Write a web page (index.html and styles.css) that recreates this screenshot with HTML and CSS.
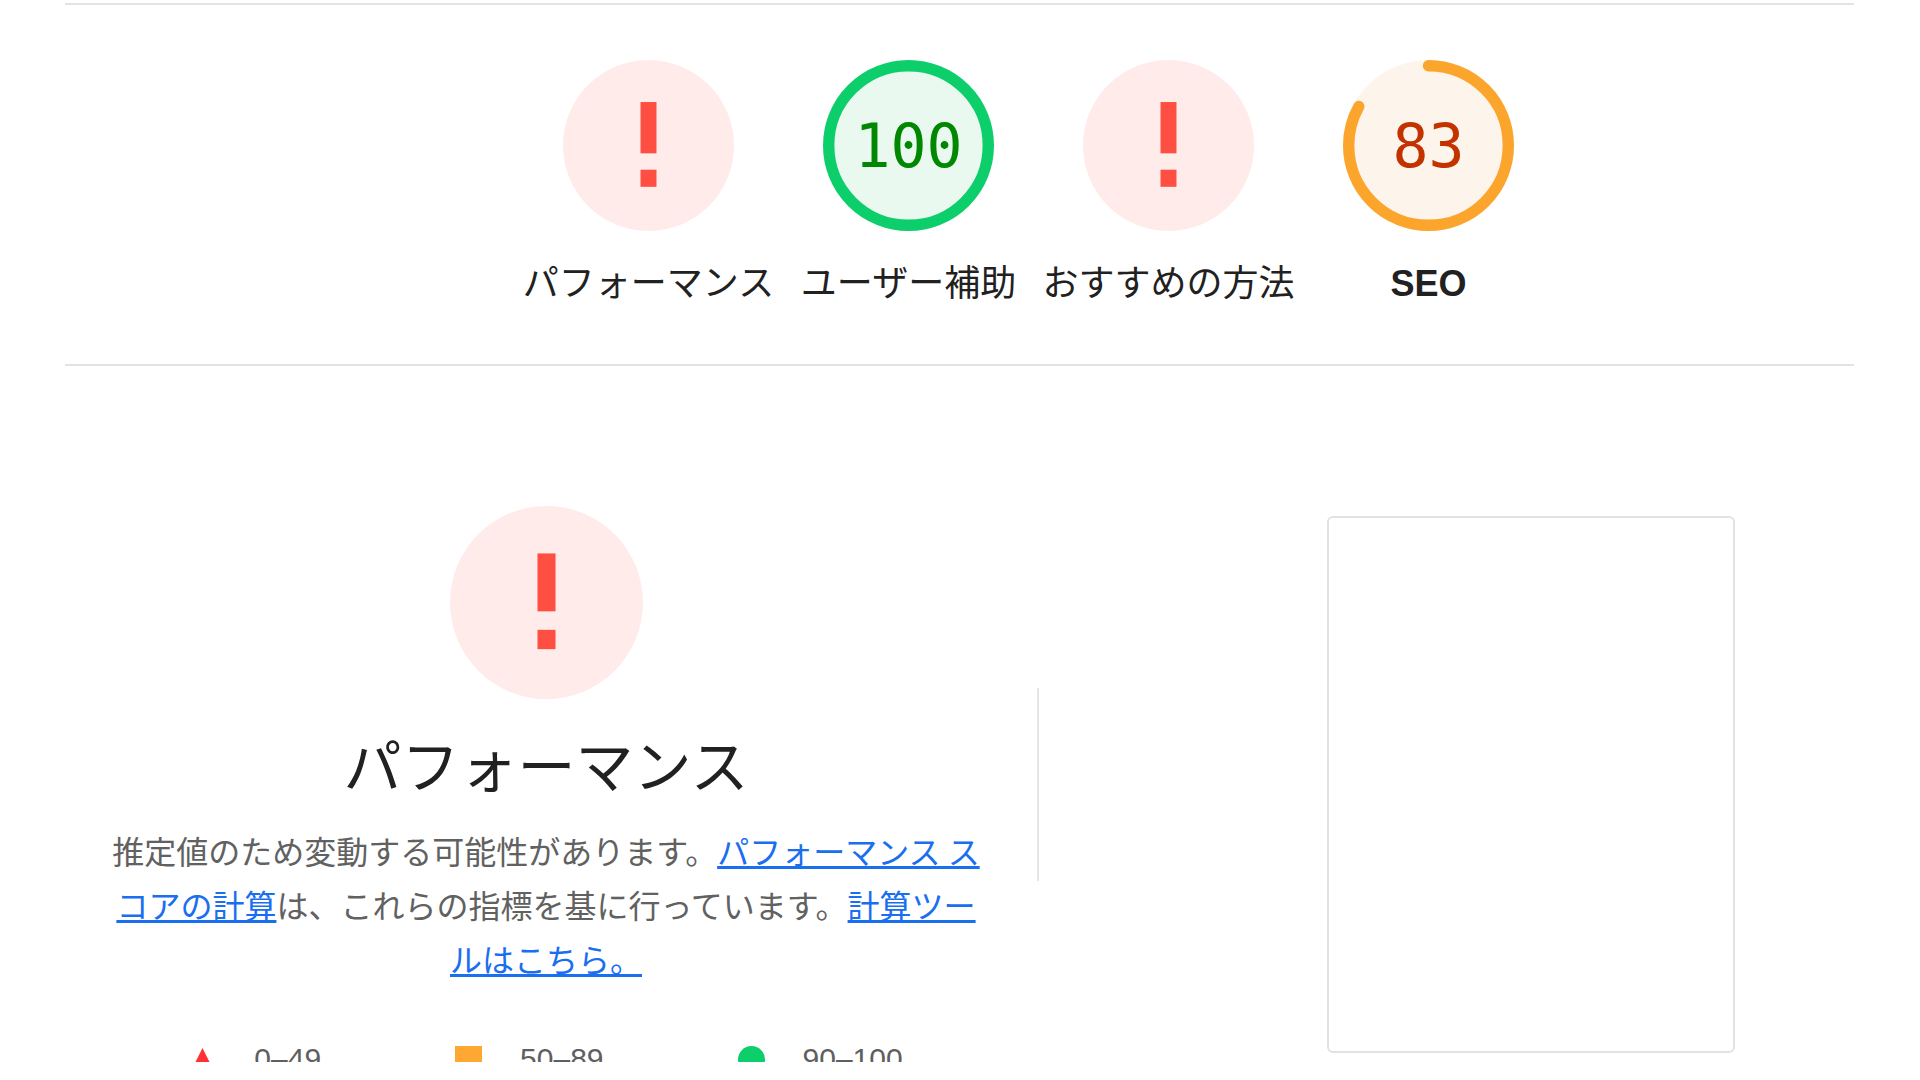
FILE: index.html
```html
<!DOCTYPE html>
<html lang="ja">
<head>
    <meta charset="UTF-8">
    <meta name="viewport" content="width=device-width, initial-scale=1.0">
    <title>Lighthouse レポート</title>
    <link rel="stylesheet" href="styles.css">
</head>
<body>
    <div class="viewport">
        <div class="report">
            <header class="scores-header">
                <a class="gauge" href="#performance">
                    <svg class="gauge-svg" viewBox="0 0 120 120">
                        <circle cx="60" cy="60" r="60" class="fail-bg"/>
                        <rect x="54.4" y="29.5" width="11.2" height="36" class="fail-mark"/>
                        <rect x="54.4" y="77" width="11.2" height="12" class="fail-mark"/>
                    </svg>
                    <span class="gauge-label">パフォーマンス</span>
                </a>
                <a class="gauge" href="#accessibility">
                    <svg class="gauge-svg" viewBox="0 0 120 120">
                        <circle cx="60" cy="60" r="56" class="pass-ring"/>
                        <text x="60" y="75" class="gauge-num pass-num">100</text>
                    </svg>
                    <span class="gauge-label">ユーザー補助</span>
                </a>
                <a class="gauge" href="#best-practices">
                    <svg class="gauge-svg" viewBox="0 0 120 120">
                        <circle cx="60" cy="60" r="60" class="fail-bg"/>
                        <rect x="54.4" y="29.5" width="11.2" height="36" class="fail-mark"/>
                        <rect x="54.4" y="77" width="11.2" height="12" class="fail-mark"/>
                    </svg>
                    <span class="gauge-label">おすすめの方法</span>
                </a>
                <a class="gauge" href="#seo">
                    <svg class="gauge-svg" viewBox="0 0 120 120">
                        <circle cx="60" cy="60" r="56" class="avg-base"/>
                        <circle cx="60" cy="60" r="56" class="avg-arc" stroke-dasharray="292 352" transform="rotate(-90 60 60)"/>
                        <text x="60" y="75" class="gauge-num avg-num">83</text>
                    </svg>
                    <span class="gauge-label gauge-label--latin">SEO</span>
                </a>
            </header>

            <section class="category" id="performance">
                <div class="category-header">
                    <svg class="gauge-svg gauge-svg--large" viewBox="0 0 120 120">
                        <circle cx="60" cy="60" r="60" class="fail-bg"/>
                        <rect x="54.4" y="29.5" width="11.2" height="36" class="fail-mark"/>
                        <rect x="54.4" y="77" width="11.2" height="12" class="fail-mark"/>
                    </svg>
                    <h2 class="category-title">パフォーマンス</h2>
                    <p class="category-desc">推定値のため変動する可能性があります。<a href="#">パフォーマンス スコアの計算</a>は、これらの指標を基に行っています。<a href="#">計算ツールはこちら。 </a></p>
                    <div class="scorescale">
                        <span class="scale-item">
                            <svg class="scale-icon" viewBox="0 0 27 27"><polygon points="13.5,2 22,19 5,19" fill="#ff3333"/></svg>
                            0–49
                        </span>
                        <span class="scale-item">
                            <span class="scale-icon scale-icon--avg"></span>
                            50–89
                        </span>
                        <span class="scale-item">
                            <span class="scale-icon scale-icon--pass"></span>
                            90–100
                        </span>
                    </div>
                </div>
                <div class="divider"></div>
                <div class="filmstrip-box"></div>
            </section>
        </div>
    </div>
</body>
</html>
```

FILE: styles.css
```css
body {
    margin: 0;
    background-color: #fff;
    font-family: "Noto Sans CJK JP", sans-serif;
    color: #212121;
}

.viewport {
    height: 1062px;
    overflow: hidden;
}

.report {
    margin-left: 65px;
    width: 1789px;
}

/* cabecera de puntuaciones */
.scores-header {
    margin-top: 3px;
    border-top: 2px solid #e3e3e3;
    border-bottom: 2px solid #e3e3e3;
    padding: 55px 0 58px 158px;
    display: flex;
    justify-content: center;
}

.gauge {
    width: 260px;
    display: flex;
    flex-direction: column;
    align-items: center;
    text-decoration: none;
    color: #212121;
}

.gauge-svg {
    display: block;
    width: 171px;
    height: 171px;
}

.gauge-svg--large {
    width: 193px;
    height: 193px;
}

.fail-bg {
    fill: #feebea;
}

.fail-mark {
    fill: #ff4e42;
}

.pass-ring {
    fill: #e9f9f0;
    stroke: #0cce6b;
    stroke-width: 8;
}

.avg-base {
    fill: #fdf5ec;
    stroke: #fdf5ec;
    stroke-width: 8;
}

.avg-arc {
    fill: none;
    stroke: #fca52c;
    stroke-width: 8;
    stroke-linecap: round;
}

.gauge-num {
    font-family: "DejaVu Sans Mono", monospace;
    font-size: 42px;
    text-anchor: middle;
}

.pass-num {
    fill: #008800;
}

.avg-num {
    fill: #c33300;
}

.gauge-label {
    margin-top: 27px;
    font-size: 36px;
    line-height: 44px;
    white-space: nowrap;
}

.gauge-label--latin {
    padding-top: 4px;
    font-family: "Liberation Sans", sans-serif;
    font-weight: bold;
}

/* seccion de categoria */
.category {
    display: flex;
    align-items: flex-start;
}

.category-header {
    width: 962px;
    padding-top: 140px;
    display: flex;
    flex-direction: column;
    align-items: center;
}

.category-title {
    margin: 30px 0 0;
    font-size: 58px;
    line-height: 68px;
    font-weight: normal;
    color: #212121;
}

.category-desc {
    margin: 26px 0 0;
    width: 880px;
    font-size: 32px;
    line-height: 54px;
    text-align: center;
    color: #616161;
}

.category-desc a {
    color: #1a6ef0;
}

.scorescale {
    display: flex;
    gap: 134px;
    margin-top: 56px;
    font-family: "Liberation Sans", sans-serif;
    font-size: 30px;
    line-height: 36px;
    color: #5f5f5f;
}

.scale-item {
    display: flex;
    align-items: center;
    gap: 38px;
}

.scale-icon {
    display: block;
    width: 27px;
    height: 27px;
}

.scale-icon--avg {
    background-color: #ffa733;
}

.scale-icon--pass {
    background-color: #0cce6b;
    border-radius: 50%;
}

.divider {
    width: 2px;
    height: 193px;
    margin: 322px 0 0 10px;
    background-color: #e6e6e6;
}

.filmstrip-box {
    box-sizing: border-box;
    width: 408px;
    height: 537px;
    margin: 150px 0 0 288px;
    border: 2px solid #e2e2e2;
    border-radius: 6px;
}
```
